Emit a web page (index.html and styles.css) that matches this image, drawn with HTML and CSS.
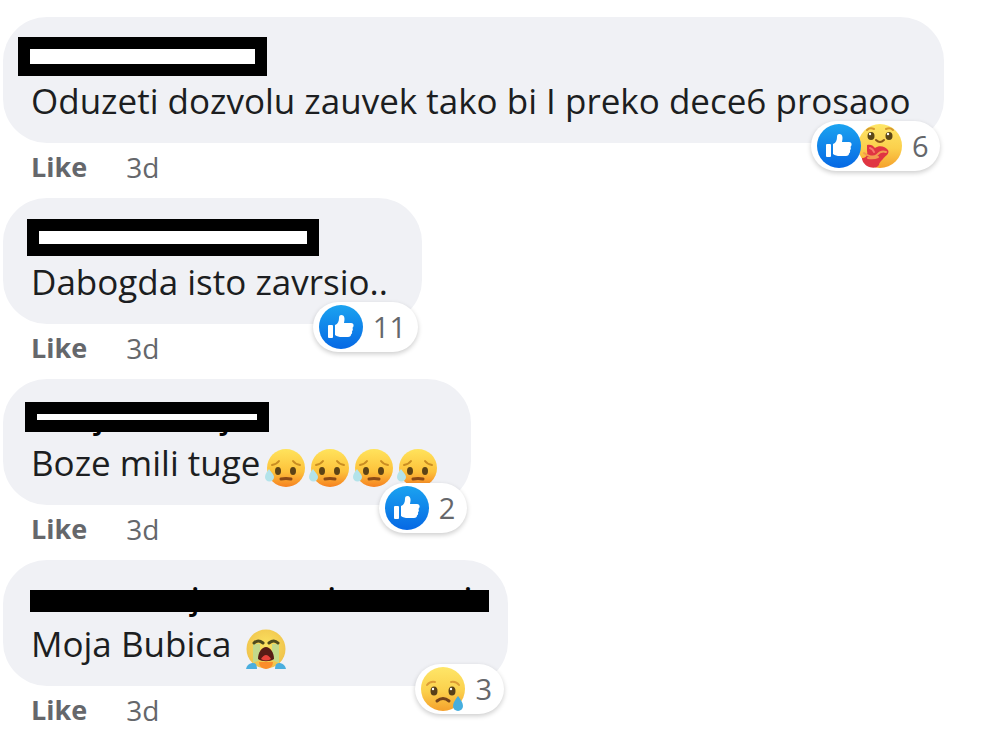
FILE: index.html
```html
<!DOCTYPE html>
<html lang="sr">

<head>
    <meta charset="UTF-8">
    <meta name="viewport" content="width=device-width, initial-scale=1">
    <title>Komentari</title>

    <link rel="stylesheet" href="styles.css">
</head>

<body>

    <svg class="defs" aria-hidden="true">
        <defs>
            <linearGradient id="blue" x1="0" y1="0" x2="0" y2="1">
                <stop offset="0" stop-color="#1ba3f0" />
                <stop offset="1" stop-color="#0668e4" />
            </linearGradient>
            <linearGradient id="yellow" x1="0" y1="0" x2="0" y2="1">
                <stop offset="0" stop-color="#fee668" />
                <stop offset="0.55" stop-color="#fbd04c" />
                <stop offset="1" stop-color="#f5a12c" />
            </linearGradient>
            <linearGradient id="orange" x1="0" y1="0" x2="0" y2="1">
                <stop offset="0" stop-color="#ffe35c" />
                <stop offset="0.6" stop-color="#fdc23b" />
                <stop offset="1" stop-color="#f68121" />
            </linearGradient>
            <radialGradient id="crying" cx="0.5" cy="0.4" r="0.6">
                <stop offset="0" stop-color="#fbe260" />
                <stop offset="1" stop-color="#efc14b" />
            </radialGradient>

            <symbol id="like" viewBox="0 0 44 44">
                <circle cx="22" cy="22" r="22" fill="url(#blue)" />
                <rect x="9" y="20" width="5" height="13" rx="1" fill="#fff" />
                <path d="M16 20c3-1 4-4 4-7 0-2 .5-3 2.500-3 2.600 0 3.400 3 2.900 5.500L25 18h7c2 0 3 1.500 2.500 3-.2 1-.7 1.500-1 2 .6 1 .5 2.500-.5 3.300.4 1.500 0 2.600-1 3.200 0 1.500-1 2.500-3 2.500h-6c-3 0-5-.6-7-2z" fill="#fff" />
            </symbol>

            <symbol id="care" viewBox="0 0 44 44">
                <circle cx="22" cy="22" r="22" fill="url(#yellow)" />
                <path d="M9 6q3-3 7-1M28 5q4-2 7 1" fill="none" stroke="#d69a2e" stroke-width="2" stroke-linecap="round" />
                <ellipse cx="13" cy="12" rx="3.500" ry="4" fill="#5b4718" />
                <ellipse cx="31" cy="12" rx="3.500" ry="4" fill="#5b4718" />
                <circle cx="12" cy="10" r="1.200" fill="#fff" />
                <circle cx="30" cy="10" r="1.200" fill="#fff" />
                <path d="M18 16q4 4 8 0" fill="none" stroke="#8c5a19" stroke-width="2" stroke-linecap="round" />
                <path d="M9 21c3-1 6 0 8 3 4-3 10-2 13 2 2 4-3 6-5 9-2 2-4 4-4 6-3 4-8 3-12 1-4-3-5-6-5-8 4 0 6-3 5-7z" fill="#e03542" />
                <path d="M6 29q8 6 13 2 4-5 9-3M10 34q6 1 10-1" fill="none" stroke="#f39a50" stroke-width="2" stroke-linecap="round" />
                <path d="M12 24q3 1 4 4" fill="none" stroke="#f7776c" stroke-width="2" stroke-linecap="round" />
            </symbol>

            <symbol id="sad" viewBox="0 0 44 44">
                <circle cx="22" cy="22" r="22" fill="url(#yellow)" />
                <path d="M6 18q3-4 8-3M30 15q5-1 8 3" fill="none" stroke="#dc9b35" stroke-width="2" stroke-linecap="round" />
                <ellipse cx="13" cy="24" rx="3.500" ry="4.500" fill="#574019" />
                <ellipse cx="31" cy="24" rx="3.500" ry="4.500" fill="#574019" />
                <circle cx="12" cy="22" r="1.200" fill="#fff" />
                <circle cx="30" cy="22" r="1.200" fill="#fff" />
                <path d="M16 34q6-5 12 0" fill="none" stroke="#74431a" stroke-width="3" stroke-linecap="round" />
                <path d="M37 29c3 4 5 7 5 10a5 5 0 0 1-10 0c0-3 2-6 5-10z" fill="#46aede" />
            </symbol>

            <symbol id="relieved" viewBox="0 0 40 40">
                <circle cx="21" cy="20" r="19" fill="url(#orange)" />
                <path d="M7 17q5-1 7-4M28 13q2 3 7 4" fill="none" stroke="#c98d22" stroke-width="2" stroke-linecap="round" />
                <ellipse cx="13" cy="23" rx="3" ry="4" fill="#5c4316" />
                <ellipse cx="28" cy="23" rx="3" ry="4" fill="#5c4316" />
                <path d="M16 31q5-1 10 0" fill="none" stroke="#8b4a15" stroke-width="3" stroke-linecap="round" />
                <path d="M4 21c3 4 5 6 5 8a4 4 0 0 1-9 0c0-3 2-5 4-8z" fill="#b3e3ea" />
            </symbol>

            <symbol id="sob" viewBox="0 0 40 40">
                <circle cx="20" cy="20" r="19.500" fill="url(#crying)" />
                <path d="M7 15h7v16l-7 3zM26 15h7v19l-7-3z" fill="#c3d98b" />
                <path d="M13 33h14q0 6-7 7-7-1-7-7z" fill="#fb8d2b" />
                <path d="M8 14q4-4 9 0M23 14q5-4 9 0" fill="none" stroke="#4f4a1d" stroke-width="3" stroke-linecap="round" />
                <path d="M12 30c0-7 4-12 8-12s8 5 8 12c-4 3-12 3-16 0z" fill="#571c16" />
                <path d="M15 30q5-8 10 0-5 3-10 0z" fill="#e8433b" />
                <path d="M0 40q1-5 6-6 5-1 5 6zM29 40q0-7 5-6 5 1 6 6z" fill="#4aaede" />
            </symbol>
        </defs>
    </svg>

    <main class="comments">

        <article class="comment">
            <div class="bubble">
                <div class="name">
                    <span class="bar bar-first"></span>
                </div>
                <p class="text">Oduzeti dozvolu zauvek tako bi I preko dece6 prosaoo</p>
                <button class="reactions">
                    <svg class="icon"><use href="#like" /></svg>
                    <svg class="icon icon-under"><use href="#care" /></svg>
                    <span>6</span>
                </button>
            </div>
            <div class="actions">
                <button class="like">Like</button>
                <a class="time" href="#">3d</a>
            </div>
        </article>

        <article class="comment">
            <div class="bubble">
                <div class="name">
                    <span class="bar bar-second"></span>
                </div>
                <p class="text">Dabogda isto zavrsio..</p>
                <button class="reactions">
                    <svg class="icon"><use href="#like" /></svg>
                    <span>11</span>
                </button>
            </div>
            <div class="actions">
                <button class="like">Like</button>
                <a class="time" href="#">3d</a>
            </div>
        </article>

        <article class="comment">
            <div class="bubble">
                <div class="name name-third">
                    <span>j</span>
                    <span>j</span>
                    <span class="bar bar-third"></span>
                </div>
                <p class="text">Boze mili tuge<span class="emojis"><svg class="emoji"><use href="#relieved" /></svg><svg class="emoji"><use href="#relieved" /></svg><svg class="emoji"><use href="#relieved" /></svg><svg class="emoji"><use href="#relieved" /></svg></span></p>
                <button class="reactions">
                    <svg class="icon"><use href="#like" /></svg>
                    <span>2</span>
                </button>
            </div>
            <div class="actions">
                <button class="like">Like</button>
                <a class="time" href="#">3d</a>
            </div>
        </article>

        <article class="comment">
            <div class="bubble bubble-wide">
                <div class="name name-fourth">
                    <span>j</span>
                    <span>i</span>
                    <span>i</span>
                    <span class="bar bar-fourth"></span>
                </div>
                <p class="text">Moja Bubica <span class="emojis"><svg class="emoji"><use href="#sob" /></svg></span></p>
                <button class="reactions">
                    <svg class="icon"><use href="#sad" /></svg>
                    <span>3</span>
                </button>
            </div>
            <div class="actions">
                <button class="like">Like</button>
                <a class="time" href="#">3d</a>
            </div>
        </article>

    </main>

</body>

</html>
```
FILE: styles.css
```css
body {
    margin: 0;
    background-color: #fff;
    font-family: "Open Sans", "Noto Sans", sans-serif;
}

button {
    border: none;
    padding: 0;
    font-family: inherit;
    cursor: pointer;
}

.defs {
    position: absolute;
    width: 0;
    height: 0;
}

.comments {
    padding: 17px 3px 0;
}

.comment {
    display: flex;
    flex-direction: column;
    align-items: flex-start;
}

.bubble {
    position: relative;
    box-sizing: border-box;
    padding: 16px 34px 16px 28px;
    background-color: #f0f1f5;
    border-radius: 44px;
}

.bubble-wide {
    min-width: 505px;
}

.name {
    display: flex;
    height: 41px;
    font-size: 30px;
    font-weight: 600;
    line-height: 46px;
    color: #050505;
}

.name-third {
    padding-left: 64px;
    gap: 118px;
}

.name-fourth {
    padding-left: 160px;
    gap: 128px;
}

.text {
    display: flex;
    align-items: center;
    height: 53px;
    margin: 0;
    font-size: 35px;
    line-height: 48px;
    color: #1c1e21;
    white-space: pre;
}

/* bars that cover the names */
.bar {
    position: absolute;
    box-sizing: border-box;
    border: 12px solid #000;
    background-color: #fff;
}

.bar-first {
    top: 20px;
    left: 15px;
    width: 249px;
    height: 39px;
}

.bar-second {
    top: 21px;
    left: 24px;
    width: 292px;
    height: 37px;
}

.bar-third {
    top: 23px;
    left: 22px;
    width: 244px;
    height: 30px;
}

.bar-fourth {
    top: 30px;
    left: 27px;
    width: 459px;
    height: 22px;
    border-width: 11px;
}

.emojis {
    display: flex;
    gap: 4px;
    padding: 10px 0 0 5px;
}

.emoji {
    width: 40px;
    height: 40px;
}

.reactions {
    position: absolute;
    right: 4px;
    bottom: -28px;
    display: flex;
    align-items: center;
    padding: 3px 12px 3px 6px;
    border-radius: 25px;
    background-color: #fff;
    box-shadow: 0 2px 5px rgba(0, 0, 0, 0.2);
    font-size: 29px;
    line-height: 44px;
    color: #65676b;
}

.reactions span {
    padding-left: 10px;
}

.icon {
    position: relative;
    z-index: 1;
    width: 44px;
    height: 44px;
}

.icon-under {
    z-index: 0;
    margin-left: -3px;
}

.actions {
    display: flex;
    align-items: center;
    gap: 39px;
    box-sizing: border-box;
    height: 55px;
    padding: 0 0 8px 28px;
    font-size: 28px;
}

.like {
    background: none;
    font-size: 27px;
    font-weight: 700;
    color: #65676b;
}

.time {
    color: #65676b;
    text-decoration: none;
}

.like:hover,
.time:hover {
    text-decoration: underline;
}
```
